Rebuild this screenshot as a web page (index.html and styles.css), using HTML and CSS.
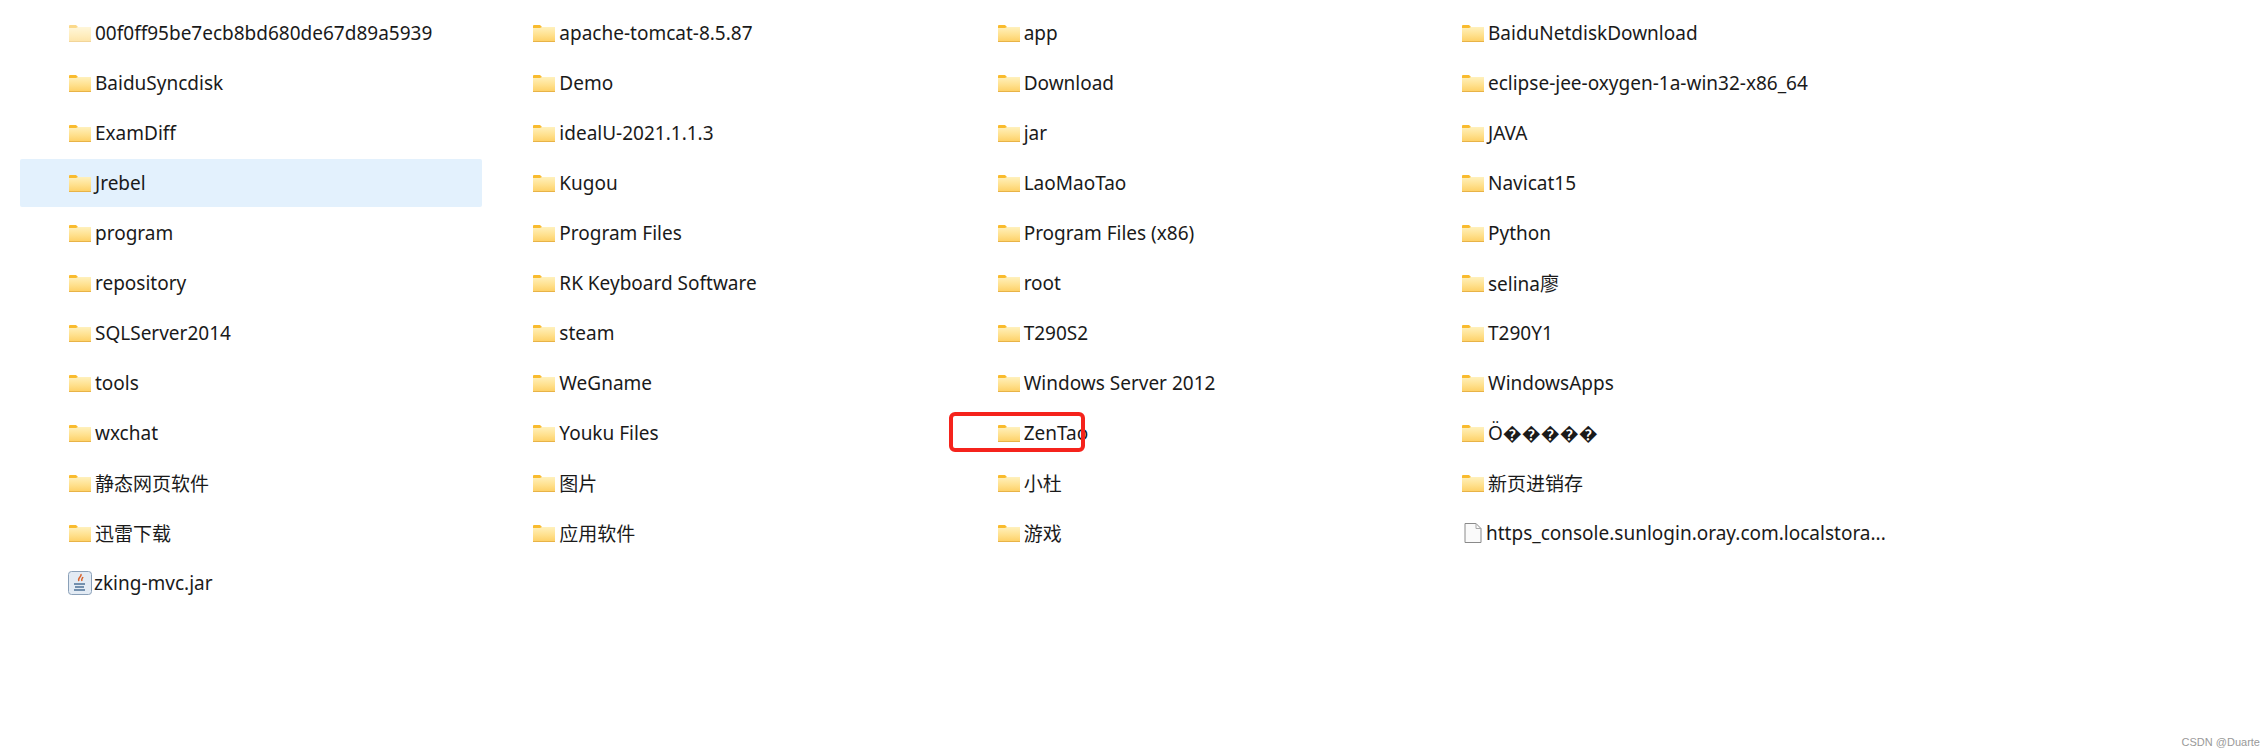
FILE: index.html
```html
<!DOCTYPE html>
<html lang="en">
<head>
    <meta charset="UTF-8">
    <title>Folder list</title>
    <link rel="stylesheet" href="styles.css">
</head>
<body>
    <svg class="icon-defs" width="0" height="0">
        <defs>
            <linearGradient id="folder-fill" x1="0" y1="0" x2="0" y2="1">
                <stop offset="0" stop-color="#fff1bd"/>
                <stop offset="0.55" stop-color="#ffe08c"/>
                <stop offset="1" stop-color="#fdcf63"/>
            </linearGradient>
            <symbol id="folder" viewBox="0 0 22 17">
                <path d="M0 1q0-1 1-1h6l3 3H0z" fill="#f9bb2e"/>
                <path d="M0 3h7l2-1h13v15H0z" fill="url(#folder-fill)"/>
                <path d="M0 16h22v1H0z" fill="#e8b347"/>
            </symbol>
            <symbol id="file" viewBox="0 0 18 20">
                <path d="M1 .5h11l5 5v14H1z" fill="#fafafa" stroke="#8a8a8a"/>
                <path d="M12 .5v5h5" fill="none" stroke="#a8a8a8"/>
            </symbol>
            <symbol id="jar" viewBox="0 0 24 24">
                <rect x=".5" y=".5" width="23" height="23" rx="3" fill="#e3ebf4" stroke="#8aa0b8"/>
                <path d="M13 3c1 3-4 4-2 7M15 6c-1 2-2 2-1 4" fill="none" stroke="#d9622b" stroke-width="1.5"/>
                <path d="M6 13h11M7 16h9M6 19h11" fill="none" stroke="#4f7396" stroke-width="1.4"/>
            </symbol>
        </defs>
    </svg>

    <div class="file-grid">
        <div class="file-item faded"><svg class="icon-folder"><use href="#folder"/></svg><span>00f0ff95be7ecb8bd680de67d89a5939</span></div>
        <div class="file-item"><svg class="icon-folder"><use href="#folder"/></svg><span>apache-tomcat-8.5.87</span></div>
        <div class="file-item"><svg class="icon-folder"><use href="#folder"/></svg><span>app</span></div>
        <div class="file-item"><svg class="icon-folder"><use href="#folder"/></svg><span>BaiduNetdiskDownload</span></div>

        <div class="file-item"><svg class="icon-folder"><use href="#folder"/></svg><span>BaiduSyncdisk</span></div>
        <div class="file-item"><svg class="icon-folder"><use href="#folder"/></svg><span>Demo</span></div>
        <div class="file-item"><svg class="icon-folder"><use href="#folder"/></svg><span>Download</span></div>
        <div class="file-item"><svg class="icon-folder"><use href="#folder"/></svg><span>eclipse-jee-oxygen-1a-win32-x86_64</span></div>

        <div class="file-item"><svg class="icon-folder"><use href="#folder"/></svg><span>ExamDiff</span></div>
        <div class="file-item"><svg class="icon-folder"><use href="#folder"/></svg><span>idealU-2021.1.1.3</span></div>
        <div class="file-item"><svg class="icon-folder"><use href="#folder"/></svg><span>jar</span></div>
        <div class="file-item"><svg class="icon-folder"><use href="#folder"/></svg><span>JAVA</span></div>

        <div class="file-item selected"><svg class="icon-folder"><use href="#folder"/></svg><span>Jrebel</span></div>
        <div class="file-item"><svg class="icon-folder"><use href="#folder"/></svg><span>Kugou</span></div>
        <div class="file-item"><svg class="icon-folder"><use href="#folder"/></svg><span>LaoMaoTao</span></div>
        <div class="file-item"><svg class="icon-folder"><use href="#folder"/></svg><span>Navicat15</span></div>

        <div class="file-item"><svg class="icon-folder"><use href="#folder"/></svg><span>program</span></div>
        <div class="file-item"><svg class="icon-folder"><use href="#folder"/></svg><span>Program Files</span></div>
        <div class="file-item"><svg class="icon-folder"><use href="#folder"/></svg><span>Program Files (x86)</span></div>
        <div class="file-item"><svg class="icon-folder"><use href="#folder"/></svg><span>Python</span></div>

        <div class="file-item"><svg class="icon-folder"><use href="#folder"/></svg><span>repository</span></div>
        <div class="file-item"><svg class="icon-folder"><use href="#folder"/></svg><span>RK Keyboard Software</span></div>
        <div class="file-item"><svg class="icon-folder"><use href="#folder"/></svg><span>root</span></div>
        <div class="file-item"><svg class="icon-folder"><use href="#folder"/></svg><span>selina廖</span></div>

        <div class="file-item"><svg class="icon-folder"><use href="#folder"/></svg><span>SQLServer2014</span></div>
        <div class="file-item"><svg class="icon-folder"><use href="#folder"/></svg><span>steam</span></div>
        <div class="file-item"><svg class="icon-folder"><use href="#folder"/></svg><span>T290S2</span></div>
        <div class="file-item"><svg class="icon-folder"><use href="#folder"/></svg><span>T290Y1</span></div>

        <div class="file-item"><svg class="icon-folder"><use href="#folder"/></svg><span>tools</span></div>
        <div class="file-item"><svg class="icon-folder"><use href="#folder"/></svg><span>WeGname</span></div>
        <div class="file-item"><svg class="icon-folder"><use href="#folder"/></svg><span>Windows Server 2012</span></div>
        <div class="file-item"><svg class="icon-folder"><use href="#folder"/></svg><span>WindowsApps</span></div>

        <div class="file-item"><svg class="icon-folder"><use href="#folder"/></svg><span>wxchat</span></div>
        <div class="file-item"><svg class="icon-folder"><use href="#folder"/></svg><span>Youku Files</span></div>
        <div class="file-item marked"><svg class="icon-folder"><use href="#folder"/></svg><span>ZenTao</span></div>
        <div class="file-item"><svg class="icon-folder"><use href="#folder"/></svg><span>Ö�����</span></div>

        <div class="file-item"><svg class="icon-folder"><use href="#folder"/></svg><span>静态网页软件</span></div>
        <div class="file-item"><svg class="icon-folder"><use href="#folder"/></svg><span>图片</span></div>
        <div class="file-item"><svg class="icon-folder"><use href="#folder"/></svg><span>小杜</span></div>
        <div class="file-item"><svg class="icon-folder"><use href="#folder"/></svg><span>新页进销存</span></div>

        <div class="file-item"><svg class="icon-folder"><use href="#folder"/></svg><span>迅雷下载</span></div>
        <div class="file-item"><svg class="icon-folder"><use href="#folder"/></svg><span>应用软件</span></div>
        <div class="file-item"><svg class="icon-folder"><use href="#folder"/></svg><span>游戏</span></div>
        <div class="file-item"><svg class="icon-file"><use href="#file"/></svg><span>https_console.sunlogin.oray.com.localstora...</span></div>

        <div class="file-item"><svg class="icon-jar"><use href="#jar"/></svg><span>zking-mvc.jar</span></div>
    </div>

    <div class="watermark">CSDN @Duarte</div>
</body>
</html>
```

FILE: styles.css
```css
body {
    font-family: "Noto Sans", "Noto Sans CJK SC", sans-serif;
    margin: 0;
    height: 754px;
    overflow: hidden;
    position: relative;
    background-color: white;
    color: #1a1a1a;
}
.icon-defs {
    position: absolute;
}
.file-grid {
    display: grid;
    grid-template-columns: repeat(4, 462px);
    grid-auto-rows: 48px;
    column-gap: 2.33px;
    row-gap: 2px;
    padding: 9px 0 0 20px;
}
.file-item {
    position: relative;
    display: flex;
    align-items: center;
    padding-left: 49px;
    border-radius: 2px;
    font-size: 19px;
    white-space: nowrap;
}
.file-item svg {
    flex: none;
}
.icon-folder {
    width: 22px;
    height: 17px;
    margin-right: 4px;
}
.icon-file {
    width: 18px;
    height: 20px;
    margin: 0 4px 0 2px;
}
.icon-jar {
    width: 24px;
    height: 24px;
    margin: 0 2px 0 -1px;
}
.faded .icon-folder {
    opacity: 0.55;
}
.selected {
    background-color: #e3f1fd;
}
.marked::after {
    content: "";
    position: absolute;
    left: 0;
    top: 3px;
    width: 128px;
    height: 32px;
    border: 4px solid #f5231c;
    border-radius: 6px;
}
.watermark {
    position: absolute;
    right: 6px;
    bottom: 6px;
    font-family: "Liberation Sans", sans-serif;
    font-size: 11px;
    color: #999;
}
```
